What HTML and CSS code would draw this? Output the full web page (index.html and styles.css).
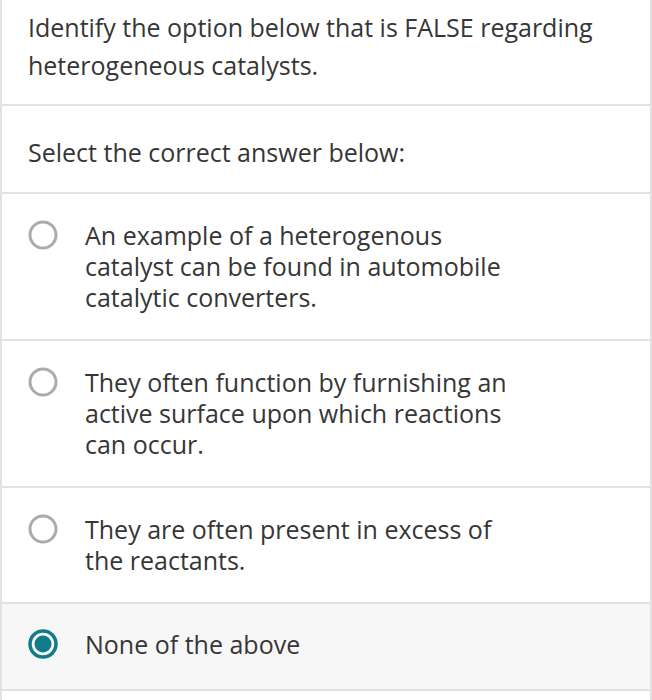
FILE: index.html
```html
<!DOCTYPE html>
<html>
<head>
<meta charset="utf-8">
<link rel="stylesheet" href="styles.css">
</head>
<body>
<div class="card">
  <div class="question">Identify the option below that is FALSE regarding heterogeneous catalysts.</div>
  <div class="prompt">Select the correct answer below:</div>
  <div class="option">
    <svg class="radio" width="30" height="30" viewBox="0 0 30 30"><circle cx="15" cy="15" r="13" fill="none" stroke="#ababab" stroke-width="3"/></svg>
    <div class="label">An example of a heterogenous catalyst can be found in automobile catalytic converters.</div>
  </div>
  <div class="option">
    <svg class="radio" width="30" height="30" viewBox="0 0 30 30"><circle cx="15" cy="15" r="13" fill="none" stroke="#ababab" stroke-width="3"/></svg>
    <div class="label">They often function by furnishing an active surface upon which reactions can occur.</div>
  </div>
  <div class="option">
    <svg class="radio" width="30" height="30" viewBox="0 0 30 30"><circle cx="15" cy="15" r="13" fill="none" stroke="#ababab" stroke-width="3"/></svg>
    <div class="label">They are often present in excess of the reactants.</div>
  </div>
  <div class="option selected">
    <svg class="radio" width="30" height="30" viewBox="0 0 30 30"><circle cx="15" cy="15" r="13" fill="none" stroke="#127b8a" stroke-width="3.5"/><circle cx="15" cy="15" r="8.5" fill="#127b8a"/></svg>
    <div class="label">None of the above</div>
  </div>
</div>
</body>
</html>
```
FILE: styles.css
```css
html, body {
  margin: 0;
  padding: 0;
  background: #ffffff;
}
body {
  font-family: "Open Sans", "Liberation Sans", sans-serif;
  color: #363636;
}
.card {
  width: 652px;
  height: 700px;
  box-sizing: border-box;
  border-left: 2px solid #e2e2e2;
  border-right: 2px solid #e2e2e2;
}
.question {
  font-size: 25px;
  line-height: 38px;
  padding: 8px 26px 20px 26px;
  border-bottom: 2px solid #e2e2e2;
}
.prompt {
  font-size: 25px;
  line-height: 38px;
  padding: 27px 26px 21px 26px;
  border-bottom: 2px solid #e2e2e2;
}
.option {
  display: flex;
  align-items: flex-start;
  gap: 27px;
  padding: 26px 26px 26px 26px;
  border-bottom: 2px solid #e2e2e2;
}
.option.selected {
  background: #f7f7f7;
  padding-top: 25px;
  padding-bottom: 29px;
}
.radio {
  flex: none;
  margin-top: 0px;
}
.label {
  font-size: 25px;
  line-height: 31px;
  max-width: 435px;
}
```
